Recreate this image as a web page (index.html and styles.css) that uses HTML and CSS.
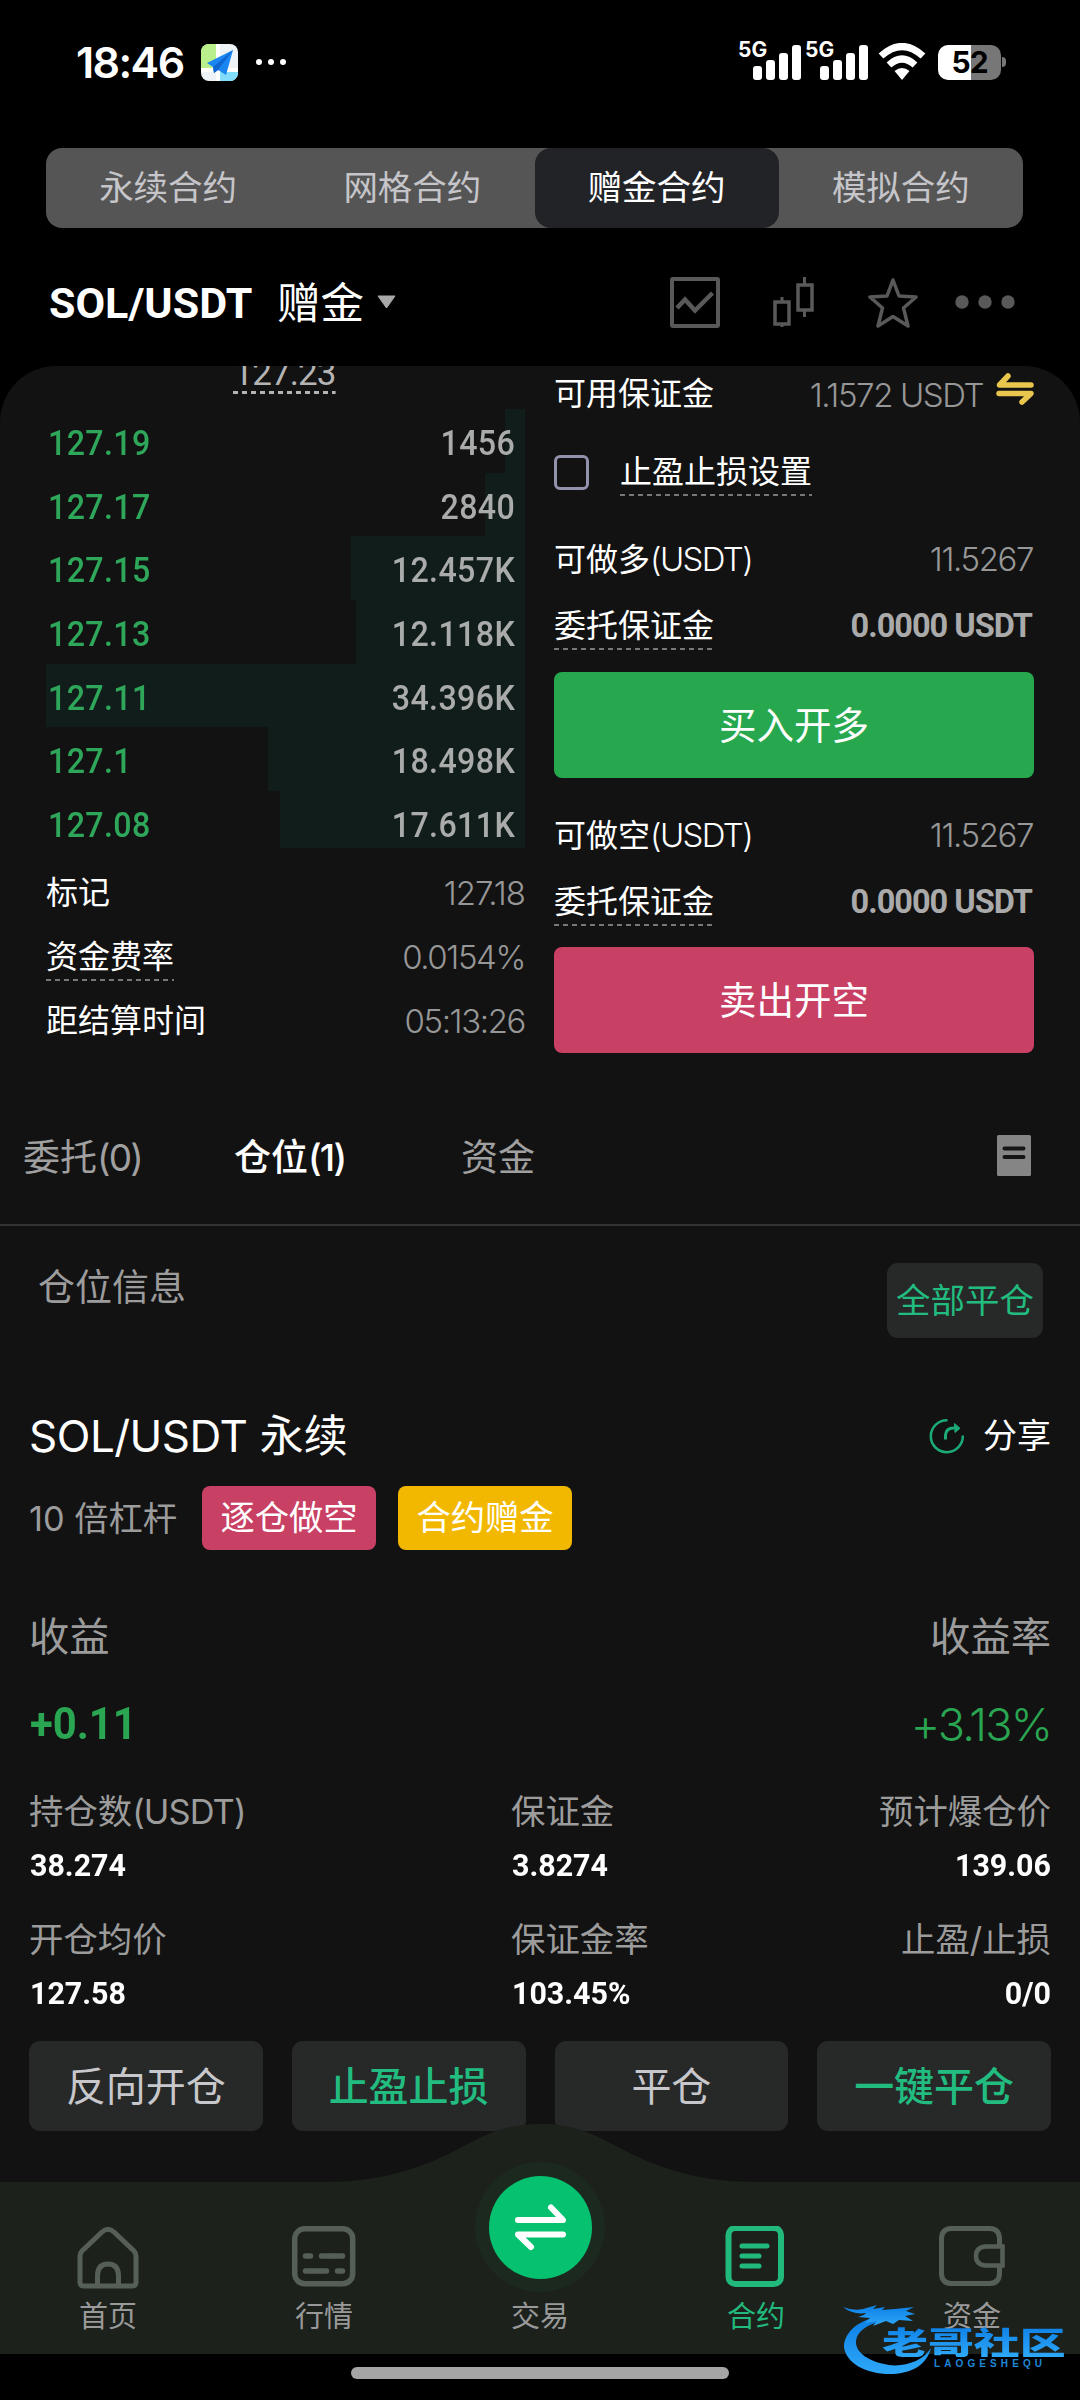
FILE: index.html
```html
<!DOCTYPE html>
<html lang="zh-CN">
<head>
<meta charset="utf-8">
<title>SOL/USDT 赠金合约</title>
<link rel="stylesheet" href="styles.css">
</head>
<body>
<div class="screen">
  <header class="status">
    <div class="status-left">
      <span class="clock">18:46</span>
      <svg class="map-app" width="37" height="37" viewBox="0 0 37 37">
        <defs><clipPath id="app-clip"><rect width="37" height="37" rx="8"/></clipPath></defs>
        <g clip-path="url(#app-clip)">
          <rect width="37" height="37" fill="#eef3f8"/>
          <path d="M0 0H15V24H0Z" fill="#b9f08c"/>
          <path d="M19 28H37V37H19Z" fill="#82dcfb"/>
          <path d="M15 0H19V37H15Z M0 24H37V28H0Z" fill="#fff"/>
          <path d="M32 6 L6 19 L12 23 L13 29 L17 26 L25 31 Z" fill="#1a86f2"/>
          <path d="M32 6 L12 23 L13 29 L17 26 Z" fill="#0f66d0"/>
        </g>
      </svg>
      <svg width="30" height="8" viewBox="0 0 30 8" fill="#fff"><circle cx="3" cy="4" r="3"/><circle cx="15" cy="4" r="3"/><circle cx="27" cy="4" r="3"/></svg>
    </div>
    <div class="status-right">
      <div class="signal"><span>5G</span>
        <svg width="50" height="36" viewBox="0 0 50 36" fill="#fff"><rect x="1" y="21" width="9" height="14" rx="3"/><rect x="14" y="15" width="9" height="20" rx="3"/><rect x="27" y="8" width="9" height="27" rx="3"/><rect x="40" y="0" width="9" height="35" rx="3"/></svg>
      </div>
      <div class="signal"><span>5G</span>
        <svg width="50" height="36" viewBox="0 0 50 36" fill="#fff"><rect x="1" y="21" width="9" height="14" rx="3"/><rect x="14" y="15" width="9" height="20" rx="3"/><rect x="27" y="8" width="9" height="27" rx="3"/><rect x="40" y="0" width="9" height="35" rx="3"/></svg>
      </div>
      <svg class="wifi" width="48" height="38" viewBox="0 0 48 38"><g fill="none" stroke="#fff" stroke-width="7"><path d="M3 13 Q24 -6 45 13"/><path d="M11 22 Q24 10 37 22"/></g><path d="M16.500 28 Q24 22 31.500 28 L24 37Z" fill="#fff"/></svg>
      <div class="battery"><div class="cell"><span>52</span></div><i></i></div>
    </div>
  </header>

  <nav class="modes">
    <a>永续合约</a><a>网格合约</a><a class="on">赠金合约</a><a>模拟合约</a>
  </nav>

  <div class="pair">
    <span class="pair-name">SOL/USDT</span><span class="pair-kind">赠金</span>
    <svg class="caret" width="19" height="14" viewBox="0 0 19 14"><path d="M1 1H18L9.500 13Z" fill="#a9a9a9" stroke="#a9a9a9" stroke-linejoin="round"/></svg>
    <div class="tools">
      <svg width="50" height="51" viewBox="0 0 50 51" fill="none" stroke="#595959" stroke-width="4"><rect x="2" y="2" width="46" height="47" rx="1"/><path d="M7 31 L15 22.500 L25 33.500 L42.500 16" stroke-width="4.500"/></svg>
      <svg width="42" height="51" viewBox="0 0 42 51" fill="none" stroke="#595959" stroke-width="3.500"><rect x="2" y="25" width="14" height="22"/><path d="M9 20V25M9 47V50M31.500 0V7M31.500 33V40" stroke-width="3"/><rect x="25" y="8" width="14" height="25"/></svg>
      <svg width="50" height="51" viewBox="0 0 50 51" fill="none" stroke="#595959" stroke-width="3.500" stroke-linejoin="round"><path d="M25 3 L31 19 L48 20 L35.500 31 L40 49 L25 39.500 L10 49 L14.500 31 L2 20 L19 19Z"/></svg>
      <svg width="60" height="51" viewBox="0 0 60 51" fill="#595959"><circle cx="7" cy="25" r="6.700"/><circle cx="30" cy="25" r="6.700"/><circle cx="53" cy="25" r="6.700"/></svg>
    </div>
  </div>

  <main class="panel">
    <section class="trade">
      <div class="book">
        <div class="last"><span>127.23</span></div>
        <div class="level"><i style="width:20px"></i><b>127.19</b><span>1456</span></div>
        <div class="level"><i style="width:40px"></i><b>127.17</b><span>2840</span></div>
        <div class="level"><i style="width:174px"></i><b>127.15</b><span>12.457K</span></div>
        <div class="level"><i style="width:169px"></i><b>127.13</b><span>12.118K</span></div>
        <div class="level"><i style="width:479px"></i><b>127.11</b><span>34.396K</span></div>
        <div class="level"><i style="width:257px"></i><b>127.1</b><span>18.498K</span></div>
        <div class="level end"><i style="width:245px"></i><b>127.08</b><span>17.611K</span></div>
        <div class="facts">
          <div class="row"><span>标记</span><em class="mark-price">127.18</em></div>
          <div class="row"><span class="hint">资金费率</span><em>0.0154%</em></div>
          <div class="row"><span>距结算时间</span><em>05:13:26</em></div>
        </div>
      </div>
      <div class="order">
        <div class="row avail"><span>可用保证金</span><em>1.1572 USDT</em>
          <svg width="38" height="32" viewBox="0 0 38 32" fill="none" stroke="#e9c64e" stroke-width="5.500" stroke-linecap="round" stroke-linejoin="round"><path d="M35 12H3.500L12 3"/><path d="M3 20.500H35L26 29"/></svg>
        </div>
        <div class="row check"><i class="box"></i><span class="hint">止盈止损设置</span></div>
        <div class="row can"><span>可做多<small>(USDT)</small></span><em>11.5267</em></div>
        <div class="row margin"><span class="hint">委托保证金</span><strong>0.0000 USDT</strong></div>
        <button class="buy">买入开多</button>
        <div class="row can second"><span>可做空<small>(USDT)</small></span><em>11.5267</em></div>
        <div class="row margin"><span class="hint">委托保证金</span><strong>0.0000 USDT</strong></div>
        <button class="sell">卖出开空</button>
      </div>
    </section>

    <div class="tabs">
      <a>委托<span>(0)</span></a><a class="on">仓位<span>(1)</span></a><a>资金</a>
      <svg width="34" height="41" viewBox="0 0 34 41"><rect width="34" height="41" rx="1.500" fill="#858585"/><path d="M7.500 13.500H26.500M7.500 22H26.500" stroke="#151515" stroke-width="4" stroke-linecap="round"/></svg>
    </div>

    <section class="position">
      <div class="pos-head"><span>仓位信息</span><button>全部平仓</button></div>
      <div class="pos-title"><h2><span>SOL/USDT</span> 永续</h2>
        <a class="share"><svg width="36" height="36" viewBox="0 0 36 36" fill="none" stroke="#1cab76" stroke-width="2.500"><path d="M18.500 2.200 A16 16 0 1 0 33.800 17.500"/><path d="M16.500 21.500V17 Q17 10 25 10H29" stroke-width="3"/><path d="M25.500 5.500L31 10.300L26 14.500Z" fill="#1cab76" stroke-width="1"/></svg><span>分享</span></a>
      </div>
      <div class="tags"><span>10 倍杠杆</span><b class="short">逐仓做空</b><b class="bonus">合约赠金</b></div>
      <div class="pnl-label"><span>收益</span><span>收益率</span></div>
      <div class="pnl"><b>+0.11</b><span>+3.13%</span></div>
      <dl class="stats">
        <div><dt>持仓数<span>(USDT)</span></dt><dd>38.274</dd></div>
        <div><dt>保证金</dt><dd>3.8274</dd></div>
        <div class="r"><dt>预计爆仓价</dt><dd>139.06</dd></div>
        <div><dt>开仓均价</dt><dd>127.58</dd></div>
        <div><dt>保证金率</dt><dd>103.45%</dd></div>
        <div class="r"><dt>止盈/止损</dt><dd>0/0</dd></div>
      </dl>
      <div class="actions"><button>反向开仓</button><button class="g">止盈止损</button><button>平仓</button><button class="g">一键平仓</button></div>
    </section>
  </main>

  <nav class="dock">
    <svg class="hump" width="1080" height="230" viewBox="0 0 1080 230"><path d="M0 58 H325 C388 58 430 40 462 23 C490 8 508 0 540 0 C572 0 590 8 618 23 C650 40 692 58 755 58 H1080 V230 H0Z" fill="#1c211c"/><circle cx="540" cy="103" r="65" fill="#1c291f"/></svg>
    <a><svg width="64" height="64" viewBox="0 0 64 64" fill="none" stroke="#565f56" stroke-width="5"><path d="M4 30 Q4 27 6 25 L26 6 Q32 0.500 38 6 L58 25 Q60 27 60 30 V56 Q60 60 56 60 H8 Q4 60 4 56Z"/><path d="M21.500 60V49 Q22 38 32 38 Q42 38 42.500 49V60"/></svg><span>首页</span></a>
    <a><svg width="64" height="64" viewBox="0 0 64 64" fill="none" stroke="#565f56" stroke-width="5.500"><rect x="2.700" y="2.700" width="58" height="55" rx="10"/><path d="M13.500 30H18.500M29.500 30H50.500M13.500 45H34.500M45.500 45H50.500" stroke-linecap="round"/></svg><span>行情</span></a>
    <a class="trade-btn"><svg class="orb" width="103" height="103" viewBox="0 0 103 103"><circle cx="51.500" cy="51.500" r="51.500" fill="#06c270"/><g fill="none" stroke="#fff" stroke-width="6" stroke-linecap="round" stroke-linejoin="round"><path d="M29 44H74L62 31.500"/><path d="M74 58.500H29L42 71"/></g></svg><span>交易</span></a>
    <a class="on"><svg width="64" height="64" viewBox="0 0 64 64" fill="none" stroke="#22b97c" stroke-width="6"><rect x="4.500" y="2" width="52.500" height="56" rx="7"/><path d="M18 20H43M18 30H35M18 40H35" stroke-width="5" stroke-linecap="round"/></svg><span>合约</span></a>
    <a><svg width="66" height="64" viewBox="0 0 66 64" fill="none" stroke="#565f56" stroke-width="5"><path d="M60.500 19V12 Q60 3 51 2.500H12 Q3 3 2.500 12V48 Q3 57 12 57.500H51 Q60 57 60.500 48V40"/><path d="M63.500 20.500H47 Q37 21 37 30 Q37 39 47 39.500H63.500Z" stroke-width="4.500"/></svg><span>资金</span></a>
    <div class="mark">
      <svg width="94" height="76" viewBox="0 0 94 76">
        <defs><linearGradient id="blue" x1="0" y1="0" x2="0" y2="1"><stop offset="0" stop-color="#0d7fe6"/><stop offset="1" stop-color="#2ea8f8"/></linearGradient></defs>
        <path fill="url(#blue)" d="M34 14 C14 18 1 30 1 44 C3 61 25 72 50 71 C70 70 84 61 88 45 C80 58 62 64 46 62 C27 59 12 50 13 38 C14 28 24 22 36 19Z"/>
        <path fill="url(#blue)" d="M0 4 Q10 8 20 6 L34 2 L30 6 L42 4 L39 7 L52 6 L71 4 L63 8 L72 11 L62 13 L70 18 L56 17 L50 21 L43 18 L30 23 L34 18 L22 20 L27 15 L15 14 Q22 12 23 10 Q10 12 0 4Z"/>
      </svg>
      <strong>老哥社区</strong><small>LAOGESHEQU</small>
    </div>
  </nav>
  <div class="gesture"><i></i></div>
</div>
</body>
</html>
```
FILE: styles.css
```css
* { box-sizing: border-box; }
body { margin: 0; background: #000; font-family: Inter, "Noto Sans CJK SC", sans-serif; font-weight: 400; color: #fff; }
button { border: 0; padding: 0; font: inherit; color: inherit; }
em, i { font-style: normal; }
svg { display: block; flex: none; }
.screen { width: 1080px; height: 2400px; display: flex; flex-direction: column; background: #000; white-space: nowrap; overflow: hidden; }

.status { height: 148px; flex: none; display: flex; justify-content: space-between; align-items: flex-start; padding: 41px 74px 0 76px; }
.status-left, .status-right { display: flex; align-items: center; height: 42px; }
.clock { font-size: 43px; font-weight: 600; line-height: 42px; width: 125px; letter-spacing: -1.6px; }
.map-app { margin-right: 18px; }
.signal { display: flex; position: relative; width: 67px; height: 35px; padding-left: 14px; }
.signal span { position: absolute; left: 0; top: -6px; font-size: 21px; line-height: 22px; font-weight: 700; }
.wifi { margin: 0 12px 0 6px; }
.battery { display: flex; align-items: center; gap: 1px; }
.battery .cell { width: 63px; height: 35px; border-radius: 10px; background: linear-gradient(90deg, #fff 33px, #777 33px); color: #000; text-align: center; font-size: 30px; line-height: 35px; font-weight: 700; letter-spacing: -1px; }
.battery i { width: 4px; height: 10px; background: #777; border-radius: 0 4px 4px 0; }

.modes { flex: none; width: 977px; height: 80px; margin-left: 46px; border-radius: 16px; background: #555; display: grid; grid-template-columns: repeat(4, 1fr); }
.modes a { font-size: 34.5px; line-height: 80px; text-align: center; color: #c5c5ca; border-radius: 16px; }
.modes .on { background: #222327; color: #fff; }

.pair { flex: none; height: 138px; display: flex; align-items: center; padding: 10px 65px 0 49px; line-height: 50px; }
.pair-name { font-family: Roboto, sans-serif; font-weight: 700; font-size: 43px; width: 228px; padding-top: 2px; }
.pair-kind { font-size: 43.5px; width: 100px; padding-top: 1px; }
.tools { margin-left: auto; display: flex; align-items: center; }
.tools svg:nth-child(2) { margin-left: 53px; }
.tools svg:nth-child(3) { margin-left: 53px; }
.tools svg:nth-child(4) { margin-left: 37px; }

.panel { flex: none; height: 1816px; background: #121212; border-radius: 56px 56px 0 0; overflow: hidden; }
.trade { display: grid; grid-template-columns: 479px 480px; column-gap: 29px; padding-left: 46px; height: 725px; }
.book { font-family: Roboto, sans-serif; font-weight: 500; }
.last { height: 43px; display: flex; justify-content: center; align-items: flex-start; color: #b4b4b4; font-size: 35px; font-weight: 400; }
.last span { margin: -12px 2px 0 0; padding-bottom: 0; line-height: 40px; letter-spacing: -0.9px; background: repeating-linear-gradient(90deg, #b4b4b4 0 5px, transparent 5px 9px) bottom / 100% 3px no-repeat; }
.level { position: relative; height: 63.7px; display: flex; justify-content: space-between; padding: 3px 10px 0 2px; font-size: 35px; line-height: 63px; color: #aaacab; }
.level i { position: absolute; right: 0; top: 0; height: 100%; background: #111d1a; }
.level b, .level span { position: relative; font-weight: 500; letter-spacing: 0.4px; transform: scaleX(0.92); transform-origin: left; }
.level span { transform-origin: right; }
.level b { color: #2fa75a; }
.level.end { height: 57px; }
.facts { margin-top: 12px; font-family: Inter, "Noto Sans CJK SC", sans-serif; font-weight: 400; }
.row { display: flex; align-items: center; justify-content: space-between; font-size: 32px; line-height: 48px; }
.row em { color: #979797; font-size: 33px; font-weight: 350; letter-spacing: -1.4px; }
.row .mark-price { letter-spacing: -1px; }
.facts .row { height: 64.3px; padding-top: 1px; }
.hint { background: repeating-linear-gradient(90deg, #777 0 5px, transparent 5px 9px) bottom / 100% 2px no-repeat; }
.avail { height: 56px; }
.avail em { margin-left: auto; margin-right: 13px; padding-top: 2px; }
.avail svg { margin-top: -10px; }
.check { height: 100px; justify-content: flex-start; }
.box { width: 35px; height: 35px; border: 3px solid #9292ac; border-radius: 6px; margin-right: 31px; }
.can { height: 72px; padding: 2px 1px 0 0; }
.can small { font-size: 33px; letter-spacing: -1.6px; font-weight: 350; }
.margin { height: 62px; padding: 1px 2px 0 0; }
.margin strong { font-family: Roboto, sans-serif; font-size: 32.5px; color: #aaa; letter-spacing: -1px; }
.order button { display: block; width: 480px; height: 106px; border-radius: 8px; font-size: 37.5px; line-height: 105px; }
.buy { background: #27a84f; margin-top: 16px; }
.second { margin-top: 20px; }
.sell { background: #c94065; margin-top: 15px; }

.tabs { height: 135px; display: grid; grid-template-columns: 211px 227px 1fr 34px; align-items: center; padding: 0 49px 5px 23px; border-bottom: 2px solid #333; font-size: 37px; color: #a0a0a0; }
.tabs span { letter-spacing: -1.8px; }
.tabs .on { color: #fff; font-weight: 500; }

.position { padding: 0 29px; color: #9c9c9c; }
.position button { background: #272828; border-radius: 11px; }
.pos-head { display: flex; justify-content: space-between; padding: 37px 8px 0 9px; font-size: 37px; line-height: 50px; }
.pos-head button { width: 156px; height: 75px; font-size: 34.5px; color: #22bb80; }
.pos-title { margin-top: 68px; height: 60px; display: flex; justify-content: space-between; align-items: center; color: #fff; }
h2 { margin: 0; font-size: 44px; font-weight: 400; line-height: 60px; }
h2 span { letter-spacing: -0.5px; }
.share { display: flex; align-items: center; gap: 18px; font-size: 34px; line-height: 34px; }
.tags { margin-top: 20px; height: 64px; display: flex; align-items: center; font-size: 34.3px; line-height: 63px; }
.tags span { width: 173px; }
.tags b { width: 174px; height: 64px; border-radius: 8px; font-weight: 400; text-align: center; color: #fff; }
.short { background: #c94065; margin-right: 22px; }
.tags .bonus { background: #f2b800; }
.pnl-label { margin-top: 57px; display: flex; justify-content: space-between; font-size: 40.3px; line-height: 60px; }
.pnl { margin-top: 27px; display: flex; justify-content: space-between; line-height: 61px; height: 60px; color: #2aa551; }
.pnl b { font-family: Roboto, sans-serif; font-size: 44px; transform: scaleX(0.95); transform-origin: left; padding-left: 1px; }
.pnl span { font-size: 45px; font-weight: 350; letter-spacing: -1.8px; }
.stats { margin: 37px 0 0; display: grid; grid-template-columns: 482px 1fr auto; row-gap: 34px; }
.stats dt { font-size: 34.4px; line-height: 41px; height: 40px; }
.stats dt span { letter-spacing: -0.9px; }
.stats dd { margin: 14px 0 0; padding-left: 1px; font-family: Roboto, sans-serif; font-weight: 700; font-size: 32px; line-height: 40px; color: #fff; transform: scaleX(0.95); transform-origin: left; }
.r { text-align: right; }
.stats .r dd { transform-origin: right; }
.actions { margin-top: 28px; display: grid; grid-template-columns: repeat(4, 1fr); column-gap: 29px; }
.actions button { height: 90px; font-size: 40px; line-height: 89px; color: #c8c8cc; }
.actions .g { color: #22bb80; font-weight: 500; }

.dock { position: relative; flex: none; height: 172px; display: grid; grid-template-columns: repeat(5, 1fr); color: #999; font-size: 29px; }
.hump { position: absolute; left: 0; top: -58px; }
.dock a { position: relative; display: flex; flex-direction: column; align-items: center; padding-top: 44px; }
.dock a span { line-height: 40px; margin-top: 7px; }
.dock .on { color: #22b97c; }
.dock .trade-btn { padding-top: 0; }
.dock .orb { margin-top: -6px; margin-left: 1px; }
.dock .trade-btn span { margin-top: 18px; }
.mark { position: absolute; left: 843px; top: 121px; width: 225px; height: 76px; z-index: 2; }
.mark svg { position: absolute; left: 0; top: 0; }
.mark strong { position: absolute; left: 39px; top: 22px; font: 900 31px/32px "Noto Sans CJK SC", sans-serif; transform: scaleX(1.48); transform-origin: left; background: linear-gradient(#0d7fe6, #2ea8f8); -webkit-background-clip: text; color: transparent; }
.mark small { position: absolute; left: 91px; top: 55px; font: 700 10px/12px "Liberation Sans", sans-serif; letter-spacing: 4.1px; color: #1f86d8; }
.gesture { flex: none; height: 46px; padding: 13px 0 0 351px; }
.gesture i { display: block; width: 378px; height: 12px; border-radius: 6px; background: #a5a5a5; }
```
